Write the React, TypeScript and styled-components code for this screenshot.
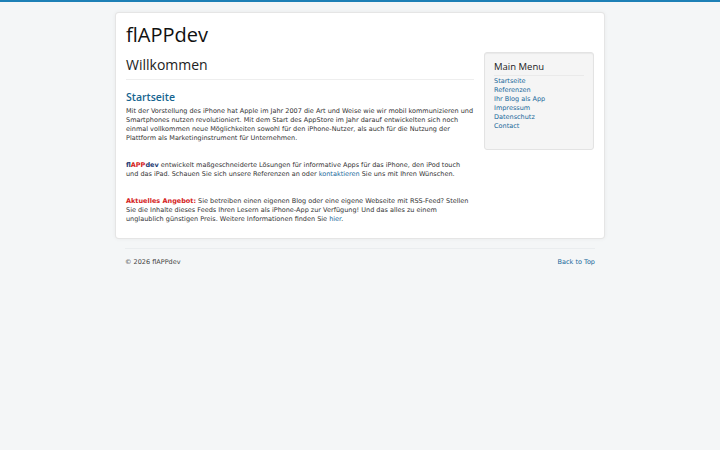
import React from 'react';
import styled, { createGlobalStyle } from 'styled-components';

const GlobalStyle = createGlobalStyle`
  html, body {
    margin: 0;
    padding: 0;
  }
  body {
    background: #f4f6f7;
    border-top: 2px solid #1d80b6;
    font-family: "DejaVu Sans", sans-serif;
    font-size: 6.5px;
    line-height: 9px;
    color: #333;
    min-height: 448px;
  }
`;

const Page = styled.div`
  width: 490px;
  margin: 0 auto;
  padding-top: 10px;
`;

const Body = styled.div`
  background: #fff;
  border: 1px solid rgba(0, 0, 0, 0.1);
  border-radius: 4px;
  box-shadow: 0 0 4px rgba(0, 0, 0, 0.05);
  padding: 10px 10px 14px;
`;

const Brand = styled.h1`
  font-family: "Open Sans", sans-serif;
  font-weight: 400;
  font-size: 20px;
  line-height: 24px;
  margin: 0 0 5px;
  color: #111;
`;

const Columns = styled.div`
  display: flex;
  gap: 10px;
`;

const Main = styled.main`
  flex: 1;
  padding-top: 5px;
`;

const PageTitle = styled.h2`
  font-family: "Open Sans", sans-serif;
  font-weight: 400;
  font-size: 14px;
  line-height: 16px;
  margin: 0;
  padding-bottom: 6px;
  border-bottom: 1px solid #eee;
  color: #222;
`;

const SectionTitle = styled.h3`
  font-family: "Open Sans", sans-serif;
  font-weight: 600;
  font-size: 10.5px;
  line-height: 14px;
  color: #15648f;
  margin: 10px 0 3px;
`;

const Para = styled.p`
  margin: 0 0 18px;
  &:last-child {
    margin-bottom: 0;
  }
`;

const Link = styled.a`
  color: #17679a;
  text-decoration: none;
`;

const LogoText = styled.strong`
  color: #233b73;
  font-weight: 700;
`;

const LogoApp = styled.span`
  color: #d41c1c;
`;

const Offer = styled.strong`
  color: #d41c1c;
`;

const Sidebar = styled.aside`
  width: 110px;
`;

const Well = styled.div`
  background: #f5f5f5;
  border: 1px solid #e3e3e3;
  border-radius: 3px;
  box-shadow: inset 0 1px 1px rgba(0, 0, 0, 0.05);
  padding: 8px 9px 18px;
`;

const MenuTitle = styled.h3`
  font-family: "Open Sans", sans-serif;
  font-weight: 400;
  font-size: 9.5px;
  line-height: 12px;
  color: #222;
  margin: 0 0 1px;
  padding-bottom: 2px;
  border-bottom: 1px solid #eaeaea;
`;

const MenuList = styled.ul`
  list-style: none;
  margin: 0;
  padding: 0;
`;

const MenuItem = styled.li`
  line-height: 9px;
`;

const Footer = styled.footer`
  margin: 9px 10px 0;
  padding-top: 9px;
  border-top: 1px solid #eaedef;
  display: flex;
  justify-content: space-between;
  color: #444;
`;

const menu = ['Startseite', 'Referenzen', 'Ihr Blog als App', 'Impressum', 'Datenschutz', 'Contact'];

const App: React.FC = () => (
  <>
    <GlobalStyle />
    <Page>
      <Body>
        <Brand>flAPPdev</Brand>
        <Columns>
          <Main>
            <PageTitle>Willkommen</PageTitle>
            <SectionTitle>Startseite</SectionTitle>
            <Para>
              Mit der Vorstellung des iPhone hat Apple im Jahr 2007 die Art und Weise wie wir mobil kommunizieren und
              Smartphones nutzen revolutioniert. Mit dem Start des AppStore im Jahr darauf entwickelten sich noch
              einmal vollkommen neue Möglichkeiten sowohl für den iPhone-Nutzer, als auch für die Nutzung der
              Plattform als Marketinginstrument für Unternehmen.
            </Para>
            <Para>
              <LogoText>
                fl<LogoApp>APP</LogoApp>dev
              </LogoText>{' '}
              entwickelt maßgeschneiderte Lösungen für informative Apps für das iPhone, den iPod touch und das iPad.
              Schauen Sie sich unsere Referenzen an oder <Link href="#">kontaktieren</Link> Sie uns mit Ihren
              Wünschen.
            </Para>
            <Para>
              <Offer>Aktuelles Angebot:</Offer> Sie betreiben einen eigenen Blog oder eine eigene Webseite mit
              RSS-Feed? Stellen Sie die Inhalte dieses Feeds Ihren Lesern als iPhone-App zur Verfügung! Und das alles
              zu einem unglaublich günstigen Preis. Weitere Informationen finden Sie <Link href="#">hier</Link>.
            </Para>
          </Main>
          <Sidebar>
            <Well>
              <MenuTitle>Main Menu</MenuTitle>
              <MenuList>
                {menu.map(item => (
                  <MenuItem key={item}>
                    <Link href="#">{item}</Link>
                  </MenuItem>
                ))}
              </MenuList>
            </Well>
          </Sidebar>
        </Columns>
      </Body>
      <Footer>
        <span>© 2026 flAPPdev</span>
        <Link href="#">Back to Top</Link>
      </Footer>
    </Page>
  </>
);

export default App;
